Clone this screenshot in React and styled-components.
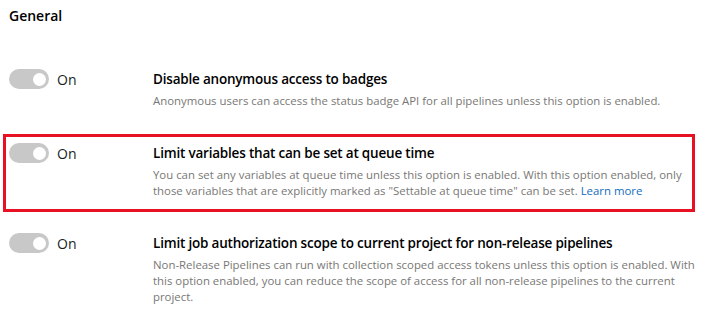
import React from "react";
import styled, { createGlobalStyle } from "styled-components";

const GlobalStyle = createGlobalStyle`
  body {
    margin: 0;
    background: #ffffff;
    font-family: "Segoe UI", "Open Sans", sans-serif;
    color: #201f1e;
  }
`;

const settings = [
  {
    title: "Disable anonymous access to badges",
    description:
      "Anonymous users can access the status badge API for all pipelines unless this option is enabled.",
  },
  {
    title: "Limit variables that can be set at queue time",
    description:
      'You can set any variables at queue time unless this option is enabled. With this option enabled, only those variables that are explicitly marked as "Settable at queue time" can be set.',
    link: "Learn more",
    highlighted: true,
  },
  {
    title: "Limit job authorization scope to current project for non-release pipelines",
    description:
      "Non-Release Pipelines can run with collection scoped access tokens unless this option is enabled. With this option enabled, you can reduce the scope of access for all non-release pipelines to the current project.",
  },
];

const App = () => {
  return (
    <Wrapper>
      <GlobalStyle />
      <Heading>General</Heading>
      <List>
        {settings.map((setting, index) => {
          const { title, description, link, highlighted } = setting;
          return (
            <Row key={index} $highlighted={highlighted}>
              <ToggleCell>
                <Toggle>
                  <Knob />
                </Toggle>
                <ToggleLabel>On</ToggleLabel>
              </ToggleCell>
              <Text>
                <Title>{title}</Title>
                <Description>
                  {description}
                  {link && (
                    <>
                      {" "}
                      <a href="#learn-more">{link}</a>
                    </>
                  )}
                </Description>
              </Text>
            </Row>
          );
        })}
      </List>
    </Wrapper>
  );
};

const Wrapper = styled.div`
  padding: 5px 0 0 3px;
  width: 692px;
`;

const Heading = styled.h2`
  margin: 0 0 33px 6px;
  font-size: 14px;
  font-weight: 600;
  line-height: 22px;
  color: #000;
`;

const List = styled.div`
  display: flex;
  flex-flow: column;
  gap: 12px;
`;

const Row = styled.div`
  display: grid;
  grid-template-columns: 144px 1fr;
  border: 3px solid ${(p) => (p.$highlighted ? "#e81123" : "transparent")};
  padding: 6px 0 10px 3px;
`;

const ToggleCell = styled.div`
  display: flex;
  align-items: center;
  gap: 8px;
  height: 20px;
`;

const Toggle = styled.div`
  width: 40px;
  height: 20px;
  border-radius: 10px;
  background: #c8c8c8;
  display: flex;
  align-items: center;
  justify-content: flex-end;
  padding: 0 3px;
  box-sizing: border-box;
`;

const Knob = styled.span`
  width: 13px;
  height: 13px;
  border-radius: 50%;
  background: #ffffff;
`;

const ToggleLabel = styled.span`
  font-size: 14px;
  color: #201f1e;
`;

const Text = styled.div`
  display: flex;
  flex-flow: column;
  gap: 4px;
  margin-right: -12px;
`;

const Title = styled.div`
  font-size: 13.5px;
  font-weight: 600;
  letter-spacing: -0.2px;
  line-height: 20px;
  color: #000;
`;

const Description = styled.div`
  font-size: 11.4px;
  line-height: 16px;
  color: #797775;

  a {
    color: #0f6cbd;
    text-decoration: none;
  }
`;

export default App;
